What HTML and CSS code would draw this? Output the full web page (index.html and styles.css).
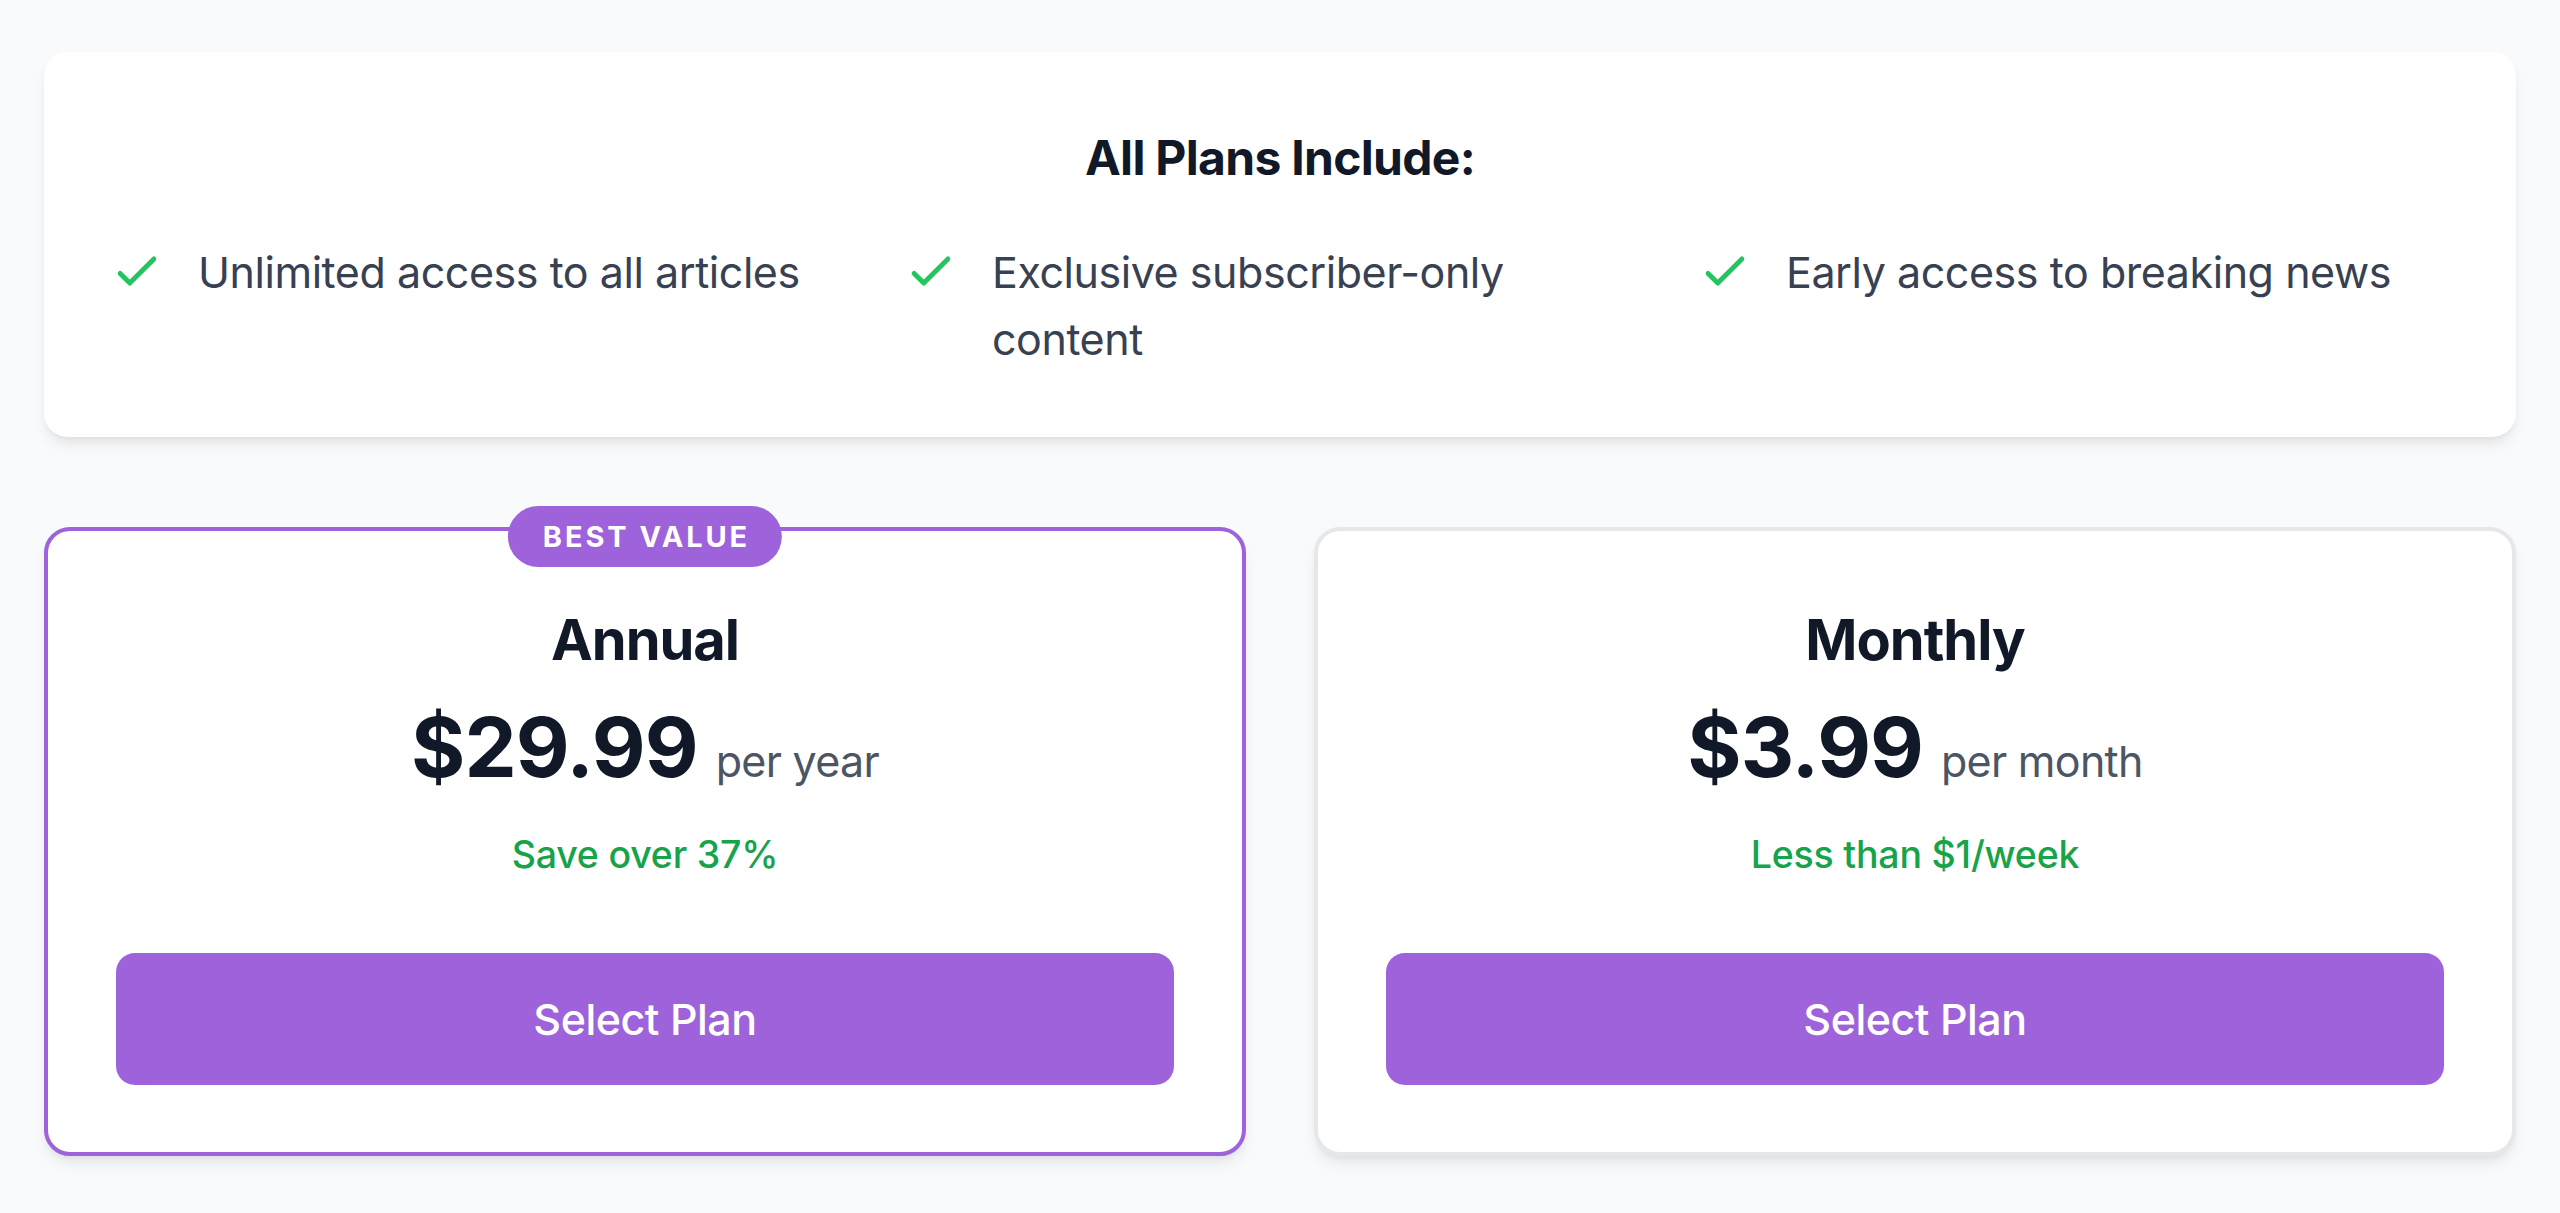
FILE: index.html
```html
<!DOCTYPE html>
<html lang="en">
<head>
<meta charset="utf-8">
<title>Plans</title>
<link rel="stylesheet" href="styles.css">
</head>
<body>
<main class="page">
  <section class="includes">
    <h2 class="includes-title">All Plans Include:</h2>
    <ul class="features">
      <li class="feature">
        <svg class="check" viewBox="0 0 24 24" aria-hidden="true"><path d="M5 13l4 4L19 7"/></svg>
        <span class="feature-text">Unlimited access to all articles</span>
      </li>
      <li class="feature">
        <svg class="check" viewBox="0 0 24 24" aria-hidden="true"><path d="M5 13l4 4L19 7"/></svg>
        <span class="feature-text">Exclusive subscriber-only content</span>
      </li>
      <li class="feature">
        <svg class="check" viewBox="0 0 24 24" aria-hidden="true"><path d="M5 13l4 4L19 7"/></svg>
        <span class="feature-text">Early access to breaking news</span>
      </li>
    </ul>
  </section>

  <section class="plans">
    <article class="plan plan-featured">
      <span class="badge">Best Value</span>
      <h3 class="plan-name">Annual</h3>
      <div class="price-row">
        <span class="price">$29.99</span>
        <span class="period">per year</span>
      </div>
      <p class="note">Save over 37%</p>
      <button class="select" type="button">Select Plan</button>
    </article>
    <article class="plan">
      <h3 class="plan-name">Monthly</h3>
      <div class="price-row">
        <span class="price">$3.99</span>
        <span class="period">per month</span>
      </div>
      <p class="note">Less than $1/week</p>
      <button class="select" type="button">Select Plan</button>
    </article>
  </section>
</main>
</body>
</html>
```

FILE: styles.css
```css
* { box-sizing: border-box; }

html, body {
  margin: 0;
  padding: 0;
}

body {
  background: #f9fafb;
  font-family: Inter, "Noto Sans", "Liberation Sans", sans-serif;
  color: #111827;
}

.page {
  padding: 52px 44px;
}

.includes {
  background: #ffffff;
  border-radius: 24px;
  padding: 72px 64px 64px;
  box-shadow: 0 10px 15px -3px rgba(0, 0, 0, 0.08), 0 4px 8px -4px rgba(0, 0, 0, 0.08);
}

.includes-title {
  margin: 0 0 48px;
  text-align: center;
  font-size: 48px;
  line-height: 67px;
  font-weight: 700;
  letter-spacing: -0.7px;
  color: #111827;
}

.features {
  list-style: none;
  margin: 0;
  padding: 0;
  display: grid;
  grid-template-columns: repeat(3, 1fr);
  column-gap: 38px;
}

.feature {
  display: flex;
  align-items: flex-start;
  gap: 32px;
}

.check {
  flex: 0 0 58px;
  width: 58px;
  height: 58px;
  margin-top: 3px;
  fill: none;
  stroke: #22c55e;
  stroke-width: 2;
  stroke-linecap: round;
  stroke-linejoin: round;
}

.feature-text {
  max-width: 640px;
  font-size: 43px;
  line-height: 67px;
  color: #374151;
  letter-spacing: -0.45px;
}

.plans {
  margin-top: 90px;
  display: grid;
  grid-template-columns: 1fr 1fr;
  column-gap: 68px;
}

.plan {
  position: relative;
  background: #ffffff;
  border: 4px solid #e5e7eb;
  border-radius: 26px;
  padding: 71px 68px 67px;
  text-align: center;
  box-shadow: 0 10px 15px -3px rgba(0, 0, 0, 0.08), 0 4px 8px -4px rgba(0, 0, 0, 0.08);
}

.plan-featured {
  border-color: #9e63db;
}

.badge {
  position: absolute;
  top: -25px;
  left: 50%;
  transform: translateX(-50%);
  height: 61px;
  padding: 0 32px 0 35px;
  border-radius: 31px;
  background: #9e63db;
  color: #ffffff;
  font-size: 29px;
  line-height: 61px;
  font-weight: 700;
  letter-spacing: 2.9px;
  text-transform: uppercase;
  white-space: nowrap;
}

.plan-name {
  margin: 0 0 20px;
  font-size: 56px;
  line-height: 77px;
  font-weight: 700;
  letter-spacing: -1px;
  color: #111827;
}

.price-row {
  height: 96px;
  display: flex;
  justify-content: center;
  align-items: baseline;
  gap: 18px;
}

.price {
  font-size: 83px;
  line-height: 96px;
  font-weight: 700;
  letter-spacing: -1px;
  color: #111827;
}

.period {
  font-size: 43px;
  line-height: 67px;
  color: #4b5563;
  letter-spacing: -0.7px;
}

.note {
  margin: 35px 0 0;
  font-size: 37.5px;
  line-height: 50px;
  font-weight: 500;
  color: #16a34a;
  letter-spacing: -0.2px;
}

.select {
  display: block;
  width: 100%;
  height: 132px;
  margin-top: 73px;
  border: none;
  border-radius: 19px;
  background: #9e63db;
  color: #ffffff;
  font-family: inherit;
  font-size: 43px;
  font-weight: 500;
  letter-spacing: -0.5px;
  cursor: pointer;
}
```
